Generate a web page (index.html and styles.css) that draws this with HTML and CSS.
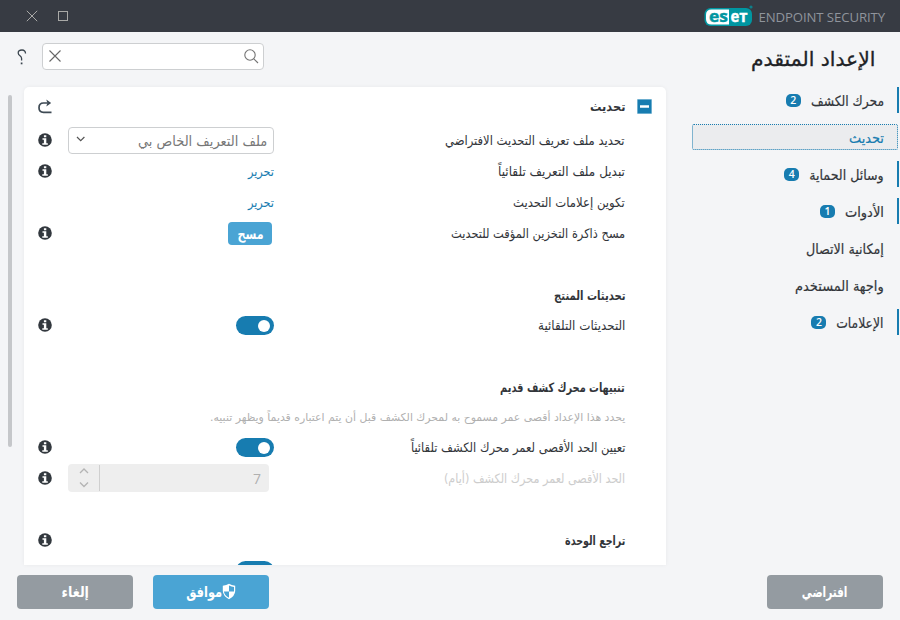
FILE: index.html
```html
<!DOCTYPE html>
<html lang="ar" dir="rtl">
<head>
<meta charset="utf-8">
<title>الإعداد المتقدم</title>
<link rel="stylesheet" href="styles.css">
</head>
<body>
<svg class="defs" aria-hidden="true">
  <symbol id="info" viewBox="0 0 14 14"><circle cx="7" cy="7" r="6.8" fill="#32383e"/><path d="M5.900 2.300h2.400v2H5.900zM4.500 5.300h3.800v5h1.500v1.400H4.300v-1.400h1.600V6.700H4.500z" fill="#fff"/></symbol>
</svg>
<header class="titlebar">
  <div class="brand">
    <span class="product">ENDPOINT SECURITY</span>
    <svg class="logo" width="49" height="22" viewBox="0 0 49 22">
      <rect x="0.5" y="3" width="47.500" height="18" rx="6" fill="#0096a1"/>
      <path d="M7.500 4.500H25V19.500H7.500Q2 19.500 2 14V10Q2 4.500 7.500 4.500Z" fill="#fff"/>
      <circle cx="47" cy="2" r="1.600" fill="#0e7f89"/>
      <text x="5" y="16.500" class="mark teal" textLength="19" lengthAdjust="spacingAndGlyphs">es</text>
      <text x="26.500" y="16.500" class="mark" textLength="17" lengthAdjust="spacingAndGlyphs">eт</text>
    </svg>
  </div>
  <svg class="winctl" width="44" height="12" viewBox="0 0 44 12" fill="none" stroke="#a9a9a7"><path d="M.8.800l10.400 10.400M11.200.800L.800 11.200"/><rect x="32.500" y="1.500" width="9" height="9"/></svg>
</header>
<div class="body">
  <aside class="sidebar">
    <h1><span class="t t-title">الإعداد المتقدم</span></h1>
    <nav>
      <a class="item changed"><span class="t n1">محرك الكشف</span><b class="badge">2</b></a>
      <a class="item active"><span class="t n2">تحديث</span></a>
      <a class="item changed"><span class="t n3">وسائل الحماية</span><b class="badge">4</b></a>
      <a class="item changed"><span class="t n4">الأدوات</span><b class="badge">1</b></a>
      <a class="item"><span class="t n5">إمكانية الاتصال</span></a>
      <a class="item"><span class="t n6">واجهة المستخدم</span></a>
      <a class="item changed"><span class="t n7">الإعلامات</span><b class="badge">2</b></a>
    </nav>
  </aside>
  <main class="content">
    <div class="searchbar">
      <div class="search">
        <svg width="16" height="16" viewBox="0 0 16 16" fill="none" stroke="#737373" stroke-width="1.100"><circle cx="7" cy="7" r="5.200"/><path d="M10.800 10.800l4.200 4.200"/></svg>
        <svg width="12" height="12" viewBox="0 0 12 12" fill="none" stroke="#666" stroke-width="1.100"><path d="M.5.500l11 11M11.500.500l-11 11"/></svg>
      </div>
      <svg class="help" width="10" height="16" viewBox="0 0 10 16" fill="none" stroke="#3a454e" stroke-width="1.300"><path d="M8.500 4.500Q8.500 1 5 1Q1.200 1 1.200 3.900Q1.200 5.500 3 6.800Q4.600 8 4.600 9.500V11.500"/><path d="M4.600 13.500v1.800" stroke-width="1.700"/></svg>
    </div>
    <div class="panel">
      <section class="card">
        <div class="row head"><svg class="collapse" width="15" height="15" viewBox="0 0 15 15"><path fill="#c5e0ee" d="M0 0h15v15H0z"/><path fill="#177cb0" d="M.5.500h14v14H.5z"/><path fill="#fff" d="M3 6.300h9v2.400H3z"/></svg><strong class="label"><span class="t l0">تحديث</span></strong>
          <svg width="14" height="15" viewBox="0 0 14 15" fill="none" stroke="#3e4a54" stroke-width="1.700"><path d="M9.500 4H5.500Q1 4 1 8.700Q1 13.300 5.500 13.300H13.500"/><path d="M8.300.4L13.200 4L8.300 7.600L9.300 4Z" fill="#3e4a54" stroke="none"/></svg></div>
        <div class="row"><span class="label"><span class="t l1">تحديد ملف تعريف التحديث الافتراضي</span></span><div class="control"><div class="select"><span class="t c1">ملف التعريف الخاص بي</span><svg width="10" height="6" viewBox="0 0 10 6" fill="none" stroke="#555" stroke-width="1.200"><path d="M1 1l3.700 3.700l3.700-3.700"/></svg></div></div><svg class="info"><use href="#info"/></svg></div>
        <div class="row"><span class="label"><span class="t l2">تبديل ملف التعريف تلقائياً</span></span><div class="control"><a class="link t">تحرير</a></div><svg class="info"><use href="#info"/></svg></div>
        <div class="row"><span class="label"><span class="t l3">تكوين إعلامات التحديث</span></span><div class="control"><a class="link t">تحرير</a></div><span class="info"></span></div>
        <div class="row"><span class="label"><span class="t l4">مسح ذاكرة التخزين المؤقت للتحديث</span></span><div class="control"><button class="small"><span class="t c2">مسح</span></button></div><svg class="info"><use href="#info"/></svg></div>
        <div class="row group"><strong class="label"><span class="t l5">تحديثات المنتج</span></strong></div>
        <div class="row"><span class="label"><span class="t l6">التحديثات التلقائية</span></span><div class="control"><i class="toggle"></i></div><svg class="info"><use href="#info"/></svg></div>
        <div class="row group"><strong class="label"><span class="t l7">تنبيهات محرك كشف قديم</span></strong></div>
        <div class="row note"><span class="label"><span class="t l8">يحدد هذا الإعداد أقصى عمر مسموح به لمحرك الكشف قبل أن يتم اعتباره قديماً ويظهر تنبيه.</span></span></div>
        <div class="row"><span class="label"><span class="t l9">تعيين الحد الأقصى لعمر محرك الكشف تلقائياً</span></span><div class="control"><i class="toggle"></i></div><svg class="info"><use href="#info"/></svg></div>
        <div class="row disabled"><span class="label"><span class="t l10">الحد الأقصى لعمر محرك الكشف (أيام)</span></span><div class="control end"><div class="spinner"><span class="value">7</span><svg width="10" height="20" viewBox="0 0 10 20" fill="none" stroke="#b4b4b4" stroke-width="1.300"><path d="M1 5l4-4l4 4M1 14.500l4 4l4-4"/></svg></div></div><svg class="info"><use href="#info"/></svg></div>
        <div class="row group"><strong class="label"><span class="t l11">تراجع الوحدة</span></strong><svg class="info"><use href="#info"/></svg></div>
        <div class="row"><span class="label"></span><div class="control"><i class="toggle"></i></div><span class="info"></span></div>
      </section>
      <div class="scroll"></div>
    </div>
  </main>
</div>
<footer class="footer">
  <button class="btn gray"><span class="t b1">افتراضي</span></button>
  <button class="btn blue"><svg class="shield" width="14" height="17" viewBox="0 0 14 17"><path d="M7 .8Q9.500 2.500 13.200 2.800V8Q13 13 7 16.200Q1 13 .8 8V2.800Q4.500 2.500 7 .8Z" fill="#fff"/><path d="M7 2.400Q9.500 3.700 12 4V8.600H7ZM7 8.600V14.800Q2.300 12.500 1.900 8.600Z" fill="#4aa4d4"/></svg><span class="t b2">موافق</span></button>
  <button class="btn gray"><span class="t b3">إلغاء</span></button>
</footer>
</body>
</html>
```
FILE: styles.css
```css
* { box-sizing: border-box; }
body { margin: 0; width: 900px; height: 620px; overflow: hidden; display: flex; flex-direction: column; background: #f4f5f7; color: #32353a; font: 13px/20px "DejaVu Sans", sans-serif; }
.defs { display: none; }
svg { flex: none; }
.t { display: inline-block; white-space: nowrap; transform-origin: right center; flex: none; }
.titlebar { height: 32px; flex: none; background: #373b43; display: flex; justify-content: space-between; align-items: center; padding: 0 15px 0 26px; }
.winctl { direction: ltr; }
.brand { display: flex; align-items: center; gap: 5px; direction: rtl; }
.product { font: 13.200px/20px "Open Sans", sans-serif; color: #8f949c; letter-spacing: -.1px; padding-top: 2px; direction: ltr; white-space: nowrap; }
.logo { margin-bottom: 1px; direction: ltr; }
.mark { font: bold 15.500px "Open Sans", sans-serif; fill: #fff; stroke: #fff; stroke-width: .4px; }
.teal { fill: #0096a1; stroke: #0096a1; }
.body { height: 533px; flex: none; display: flex; }
.sidebar { width: 234px; flex: none; }
h1 { margin: 0; height: 51px; padding: 13px 25px 0 0; font-size: 20px; line-height: 28px; font-weight: 400; color: #202226; -webkit-text-stroke: .3px; }
nav { display: flex; flex-direction: column; gap: 11px; padding: 4px 1px 0 26px; }
.item { height: 26px; padding-right: 15px; display: flex; align-items: center; gap: 10px; font-size: 14px; color: #32353a; }
.item .t { padding-top: 2px; -webkit-text-stroke: .2px; }
.changed { border-right: 2px solid #177cb0; padding-right: 13px; }
.active { margin-right: 1px; padding-right: 13px; background: #ebecee; color: #177cb0; border: 1px dotted #177cb0; border-radius: 2px; }
.badge { width: 15px; height: 13px; border-radius: 5px; background: #177cb0; color: #fff; font: 600 10.500px/13px "Open Sans", sans-serif; text-align: center; margin-right: 1px; }
.content { flex: 1; display: flex; flex-direction: column; }
.searchbar { height: 55px; flex: none; padding-left: 17px; display: flex; align-items: flex-start; justify-content: flex-end; gap: 15px; padding-top: 11px; }
.search { width: 222px; height: 27px; border: 1px solid #cdcfd1; border-radius: 4px; background: #fff; display: flex; align-items: center; justify-content: space-between; padding: 0 4px 1px 6px; }
.help { margin-top: 6px; }
.panel { flex: 1; min-height: 0; display: flex; }
.card { width: 642px; overflow: hidden; flex: none; background: #fff; border-radius: 5px 5px 0 0; box-shadow: 0 0 4px #0000000d; display: flex; flex-direction: column; }
.scroll { width: 4px; height: 352px; margin: 8px 12px 0 0; background: #c5c7ca; border-radius: 2px; }
.row { height: 31px; flex: none; display: flex; align-items: center; padding: 0 41px 0 14px; gap: 16px; }
.head { height: 38px; padding-right: 14px; gap: 12px; }
.head .label { padding-top: 1px; }
.group { margin-top: 31px; height: 30px; padding-top: 2px; }
.note { margin-top: 1px; height: 29px; font-size: 11px; color: #b0b0b0; }
.label { flex: 1; height: 20px; }
.disabled .label { color: #cdcdcd; }
.info { width: 14px; height: 14px; flex: none; margin-bottom: 2px; }
.control { width: 206px; flex: none; display: flex; align-items: center; }
.end { padding-right: 5px; margin-bottom: 2px; }
.select { width: 206px; height: 27px; border: 1px solid #cdcfd1; border-radius: 4px; display: flex; align-items: center; justify-content: space-between; padding: 0 6px 0 7px; color: #777; font-size: 14px; }
.select svg { margin-bottom: 3px; }
.link { color: #177cb0; transform: scaleX(.87); }
button { border: 0; color: #fff; padding: 0; font-family: inherit; display: flex; align-items: center; justify-content: center; }
.small { width: 44px; height: 23px; margin-right: 2px; border-radius: 4px; background: #4aa4d4; font-size: 14px; font-weight: bold; }
.small .t, .btn .t { transform-origin: center; }
.toggle { width: 38px; height: 19px; border-radius: 10px; background: #177cb0; display: flex; align-items: center; padding-right: 4px; }
.toggle::before { content: ""; width: 12px; height: 12px; border-radius: 50%; background: #fff; }
.spinner { width: 201px; height: 28px; border-radius: 4px; background: #eee; display: flex; align-items: center; padding-left: 11px; color: #b0b0b0; font: 14px "Open Sans", sans-serif; }
.value { flex: 1; height: 26px; line-height: 28px; margin-left: 10px; padding-right: 8px; border-left: 1px solid #cfcfcf; }
.footer { height: 55px; display: flex; padding: 10px 17px 0; gap: 20px; }
.btn { width: 116px; height: 34px; border-radius: 4px; font-size: 15px; font-weight: bold; }
.gray { background: #949ba1; }
.blue { background: #4aa4d4; margin-right: auto; }
.shield { margin-bottom: 2px; }

/* Condensed lettering, tuned per string */
.t-title { transform: scaleX(1.016); }
.n1 { transform: scaleX(.88); margin-left: -11px; }
.n2 { transform: scaleX(.92); }
.n3 { transform: scaleX(.9); margin-left: -9px; }
.n4 { transform: scaleX(.93); margin-left: -4px; }
.n5 { transform: scaleX(.907); }
.n6 { transform: scaleX(.927); }
.n7 { transform: scaleX(.885); margin-left: -7px; }
.l0 { transform: scaleX(.875); }
.l1 { transform: scaleX(.891); }
.l2 { transform: scaleX(.927); }
.l3 { transform: scaleX(.896); }
.l4 { transform: scaleX(.879); }
.l5 { transform: scaleX(.772); }
.l6 { transform: scaleX(.916); }
.l7 { transform: scaleX(.752); }
.l8 { transform: scaleX(.988); }
.l9 { transform: scaleX(.885); }
.l10 { transform: scaleX(.862); }
.l11 { transform: scaleX(.732); }
.c1 { transform: scaleX(.928); }
.c2 { transform: scaleX(.79); }
.b1 { transform: scaleX(.7); }
.btn .b2 { transform: scaleX(.76); transform-origin: right center; margin-left: -11px; }
.b3 { transform: scaleX(.84); }
```
